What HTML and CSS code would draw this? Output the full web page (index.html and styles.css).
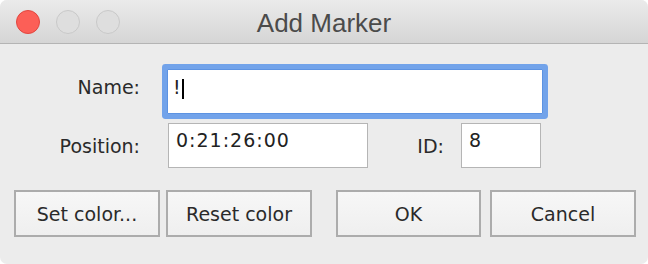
FILE: index.html
```html
<!DOCTYPE html>
<html lang="en">
<head>
    <meta charset="UTF-8">
    <title>Add Marker</title>
    <link rel="stylesheet" href="styles.css">
</head>
<body>
    <div class="window">
        <div class="titlebar">
            <div class="lights">
                <span class="light close"></span>
                <span class="light"></span>
                <span class="light"></span>
            </div>
            <div class="title">Add Marker</div>
            <div></div>
        </div>
        <div class="content">
            <div class="row row-name">
                <label class="label label-name">Name:</label>
                <div class="field field-name focused">!<span class="caret"></span></div>
            </div>
            <div class="row row-pos">
                <label class="label label-pos">Position:</label>
                <div class="field field-pos">0:21:26:00</div>
                <label class="label label-id">ID:</label>
                <div class="field field-id">8</div>
            </div>
            <div class="buttons">
                <button class="btn btn-set">Set color...</button>
                <button class="btn btn-reset">Reset color</button>
                <button class="btn btn-ok">OK</button>
                <button class="btn btn-cancel">Cancel</button>
            </div>
        </div>
    </div>
</body>
</html>
```

FILE: styles.css
```css
body {
    margin: 0;
    background: #ffffff;
    font-family: "DejaVu Sans", sans-serif;
}
.window {
    width: 648px;
    height: 264px;
    background: #ececec;
    border-radius: 7px;
    overflow: hidden;
}
.titlebar {
    display: grid;
    grid-template-columns: 1fr auto 1fr;
    align-items: center;
    height: 43px;
    background: linear-gradient(#ebebeb, #d5d5d5);
    border-bottom: 1px solid #b4b4b4;
}
.lights {
    display: flex;
    gap: 16px;
    padding-left: 16px;
}
.light {
    width: 22px;
    height: 22px;
    border-radius: 50%;
    background: #dedede;
    border: 1px solid #c9c9c9;
}
.light.close {
    background: #fc5f57;
    border-color: #e2463f;
}
.title {
    font-family: "Liberation Sans", Arial, sans-serif;
    font-size: 26px;
    color: #4b4b4b;
    padding-top: 4px;
}
.content {
    padding-top: 25px;
}
.row {
    display: flex;
    align-items: flex-start;
}
.row-pos {
    margin-top: 9px;
}
.label {
    font-size: 19px;
    line-height: 22px;
    color: #2a2a2a;
    text-align: right;
}
.label-name {
    width: 140px;
    padding-top: 7px;
    margin-right: 27px;
}
.label-pos {
    width: 140px;
    padding-top: 12px;
    margin-right: 28px;
}
.label-id {
    width: 76px;
    padding-top: 12px;
    margin-right: 17px;
}
.field {
    box-sizing: border-box;
    height: 45px;
    background: #ffffff;
    border: 1px solid #b5b5b5;
    padding: 5px 0 0 7px;
    font-size: 19px;
    line-height: 22px;
    letter-spacing: 1px;
    color: #222222;
}
.field-name {
    width: 376px;
    padding-top: 6px;
    padding-left: 5px;
    letter-spacing: 0;
}
.field-name.focused {
    border-color: #5d93e2;
    border-radius: 1px;
    box-shadow: 0 0 0 5px #72a3ea;
}
.caret {
    display: inline-block;
    width: 2px;
    height: 20px;
    background: #000000;
    margin-left: 1px;
    vertical-align: -5px;
}
.field-pos {
    width: 200px;
}
.field-id {
    width: 80px;
}
.buttons {
    display: flex;
    margin-top: 22px;
    padding-left: 14px;
}
.btn {
    box-sizing: border-box;
    width: 146px;
    height: 47px;
    margin: 0;
    padding: 0;
    border: 2px solid #acacac;
    border-radius: 0;
    background: linear-gradient(#f7f7f7, #efefef);
    font-family: "DejaVu Sans", sans-serif;
    font-size: 19px;
    color: #2a2a2a;
}
.btn-reset {
    margin-left: 6px;
}
.btn-ok {
    width: 145px;
    margin-left: 24px;
}
.btn-cancel {
    margin-left: 9px;
}
```
